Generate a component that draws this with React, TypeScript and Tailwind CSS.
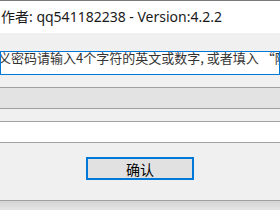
export default function App() {
  return (
    <div className="w-[280px] h-[210px] overflow-hidden flex flex-col bg-[#f0f0f0]">
      <div className="h-px bg-[#7a7a7a]" />
      <div className="h-[32px] bg-white flex items-center pl-[1px] pb-[1px] text-[14px] text-[#1a1a1a] whitespace-nowrap" style={{ fontFamily: '"Noto Sans", "Noto Sans CJK SC", sans-serif' }}>
        作者: qq541182238 - Version:4.2.2
      </div>
      <div className="h-[18px]" />
      <div className="h-[24px] border border-[#0078d7] bg-white overflow-hidden">
        <div className="-ml-[3px] -mt-[2px] text-[13px] leading-[15px] text-[#333] whitespace-nowrap" style={{ fontFamily: '"Noto Sans CJK SC", sans-serif' }}>
          义密码请输入4个字符的英文或数字, 或者填入 “随机”
        </div>
      </div>
      <div className="h-[12px]" />
      <div className="h-px bg-[#a0a0a0]" />
      <div className="h-[20px] bg-[#e3e3e3]" />
      <div className="h-px bg-[#a0a0a0]" />
      <div className="h-[12px]" />
      <div className="h-px bg-[#a0a0a0]" />
      <div className="h-[20px] bg-white" />
      <div className="h-px bg-[#a0a0a0]" />
      <div className="h-[57px] flex items-start justify-center pt-[14px]">
        <button className="w-[108px] h-[23px] border-2 border-[#0078d7] bg-[#e1e1e1] text-[14px] leading-[16px] text-black flex items-center justify-center" style={{ fontFamily: '"Noto Sans CJK SC", sans-serif' }}>
          确认
        </button>
      </div>
      <div className="h-px bg-[#a0a0a0]" />
      <div className="flex-1 bg-gradient-to-b from-[#d4d4d4] to-[#e4e4e4]" />
    </div>
  );
}
